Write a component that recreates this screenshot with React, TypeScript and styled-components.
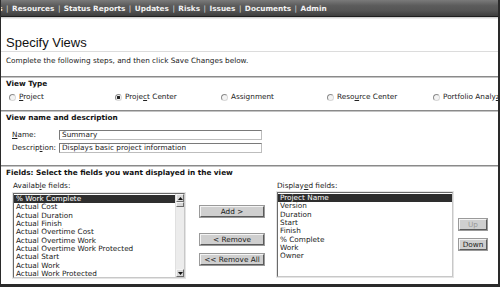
import styled, { createGlobalStyle } from "styled-components";

const Global = createGlobalStyle`
  html, body { margin: 0; padding: 0; background: #fff; }
`;

/* ── Data ── */
const NAV = ["Projects", "Resources", "Status Reports", "Updates", "Risks", "Issues", "Documents", "Admin"];

const VIEW_TYPES: { label: string; key: number; checked?: boolean }[] = [
  { label: "Project", key: 0 },
  { label: "Project Center", key: 5, checked: true },
  { label: "Assignment", key: -1 },
  { label: "Resource Center", key: 4 },
  { label: "Portfolio Analyzer", key: 15 },
];

const AVAILABLE = [
  "% Work Complete",
  "Actual Cost",
  "Actual Duration",
  "Actual Finish",
  "Actual Overtime Cost",
  "Actual Overtime Work",
  "Actual Overtime Work Protected",
  "Actual Start",
  "Actual Work",
  "Actual Work Protected",
];

const DISPLAYED = ["Project Name", "Version", "Duration", "Start", "Finish", "% Complete", "Work", "Owner"];

/* ── Styles ── */
const Frame = styled.div`
  width: 500px;
  height: 287px;
  box-sizing: border-box;
  border-left: 1px solid #2a2a2a;
  border-right: 2px solid #2a2a2a;
  border-bottom: 3px solid #2a2a2a;
  overflow: hidden;
  background: #fff;
  font-family: "DejaVu Sans", Verdana, sans-serif;
  font-size: 7.3px;
  color: #222;
`;

const NavBar = styled.div`
  height: 17px;
  display: flex;
  align-items: center;
  padding-top: 1px;
  box-sizing: border-box;
  overflow: hidden;
  background: linear-gradient(#7a7a7a, #5c5c5c 35%, #555 65%, #3e3e3e);
  border-bottom: 1px solid #1e1e1e;
  box-shadow: 0 1px 0 #d0d0d0, 0 2px 0 #ececec;
  font-weight: bold;
  font-size: 7.3px;
  color: #f2f2f2;
  white-space: nowrap;
`;

const NavTrack = styled.div`
  display: flex;
  margin-left: -32px;
`;

const NavItem = styled.span`
  &:not(:first-child)::before {
    content: "|";
    margin: 0 3.5px;
    font-weight: normal;
    color: #ddd;
  }
`;

const Title = styled.h1`
  margin: 19px 0 0 5px;
  font-family: "Liberation Sans", Arial, sans-serif;
  font-weight: normal;
  font-size: 13px;
  line-height: 14px;
  color: #111;
`;

const Rule = styled.div`
  height: 1px;
  background: #dcdcdc;
  margin-top: 1px;
`;

const Intro = styled.p`
  margin: 4px 0 0 5px;
  line-height: 10px;
  white-space: nowrap;
`;

const Section = styled.section<{ $pad: number }>`
  margin-top: ${(p) => p.$pad}px;
  border-top: 1px solid #8a8a8a;
  box-shadow: inset 0 1px 0 #c4c4c4;
`;

const SectionHead = styled.div`
  font-weight: bold;
  line-height: 10px;
  padding: 2px 0 0 5px;
  color: #111;
  white-space: nowrap;
`;

const RadioRow = styled.div`
  display: flex;
  padding: 3px 0 8px 8px;
  white-space: nowrap;
  overflow: hidden;
`;

const RadioItem = styled.label`
  width: 106px;
  flex-shrink: 0;
  display: flex;
  align-items: center;
  gap: 3px;
  line-height: 10px;
`;

const RadioDot = styled.span<{ $on?: boolean }>`
  width: 7px;
  height: 7px;
  box-sizing: border-box;
  border-radius: 50%;
  border: 1px solid #8c8c8c;
  border-right-color: #d8d8d8;
  border-bottom-color: #d8d8d8;
  background: ${(p) => (p.$on ? "radial-gradient(circle, #222 0 1.4px, #f4f4f4 1.6px)" : "#f4f4f4")};
`;

const Key = styled.span`
  text-decoration: underline;
`;

const FormGrid = styled.div`
  display: grid;
  grid-template-columns: 47px 203px;
  row-gap: 3px;
  align-items: center;
  padding: 7px 0 12px 11px;
`;

const FieldLabel = styled.span`
  line-height: 10px;
`;

const TextBox = styled.div`
  height: 10px;
  box-sizing: border-box;
  border: 1px solid #7a7a7a;
  border-right-color: #bdbdbd;
  border-bottom-color: #bdbdbd;
  padding: 0 2px;
  line-height: 8px;
  background: #fff;
`;

const FieldsArea = styled.div`
  display: grid;
  grid-template-columns: 172px 92px 176px 36px;
  padding: 3px 0 0 12px;
`;

const Column = styled.div`
  display: flex;
  flex-direction: column;
`;

const ListLabel = styled.div`
  line-height: 10px;
  margin-bottom: 2px;
`;

const ListBox = styled.div<{ $top?: number }>`
  height: 85px;
  box-sizing: border-box;
  border: 1px solid #6a6a6a;
  border-right-color: #c8c8c8;
  border-bottom-color: #c8c8c8;
  outline: 1px solid #e4e4e4;
  display: flex;
  margin-top: ${(p) => p.$top ?? 0}px;
  background: #fff;
`;

const Items = styled.div`
  flex: 1;
  padding-top: 1px;
  overflow: hidden;
`;

const Item = styled.div<{ $sel?: boolean }>`
  height: 8.33px;
  line-height: 8.33px;
  padding-left: 2px;
  white-space: nowrap;
  background: ${(p) => (p.$sel ? "#2e2e2e" : "transparent")};
  color: ${(p) => (p.$sel ? "#fff" : "#1a1a1a")};
`;

const ScrollBar = styled.div`
  width: 8px;
  display: flex;
  flex-direction: column;
  background: #ececec;
  border-left: 1px solid #e0e0e0;
`;

const ScrollBtn = styled.div`
  height: 8px;
  box-sizing: border-box;
  background: #d8d8d8;
  border: 1px solid #f4f4f4;
  border-right-color: #6a6a6a;
  border-bottom-color: #6a6a6a;
  display: flex;
  align-items: center;
  justify-content: center;
`;

const Thumb = styled(ScrollBtn)`
  height: 5px;
`;

const Track = styled.div`
  flex: 1;
`;

const ButtonStack = styled.div<{ $top: number; $left: number }>`
  display: flex;
  flex-direction: column;
  align-items: flex-start;
  padding: ${(p) => p.$top}px 0 0 ${(p) => p.$left}px;
`;

const Btn = styled.div<{ $w: number; $gap?: number; $off?: boolean }>`
  width: ${(p) => p.$w}px;
  height: 11px;
  box-sizing: border-box;
  margin-top: ${(p) => p.$gap ?? 0}px;
  background: #cfcfcf;
  border: 1px solid #f4f4f4;
  border-right-color: #5a5a5a;
  border-bottom-color: #5a5a5a;
  outline: 1px solid #9a9a9a;
  text-align: center;
  line-height: 9px;
  color: ${(p) => (p.$off ? "#9a9a9a" : "#1a1a1a")};
  white-space: nowrap;
`;

function Arrow({ up }: { up?: boolean }) {
  return (
    <svg width="5" height="3" viewBox="0 0 5 3">
      <path d={up ? "M0 3 L2.5 0 L5 3 Z" : "M0 0 L2.5 3 L5 0 Z"} fill="#111" />
    </svg>
  );
}

function withKey(label: string, k: number) {
  if (k < 0) return label;
  return (
    <>
      {label.slice(0, k)}
      <Key>{label[k]}</Key>
      {label.slice(k + 1)}
    </>
  );
}

/* ── Component ── */
export default function App() {
  return (
    <Frame>
      <Global />
      <NavBar>
        <NavTrack>
          {NAV.map((n) => (
            <NavItem key={n}>{n}</NavItem>
          ))}
        </NavTrack>
      </NavBar>

      <Title>Specify Views</Title>
      <Rule />
      <Intro>Complete the following steps, and then click Save Changes below.</Intro>

      <Section $pad={10}>
        <SectionHead>View Type</SectionHead>
        <RadioRow>
          {VIEW_TYPES.map((v) => (
            <RadioItem key={v.label}>
              <RadioDot $on={v.checked} />
              <span>{withKey(v.label, v.key)}</span>
            </RadioItem>
          ))}
        </RadioRow>
      </Section>

      <Section $pad={0}>
        <SectionHead>View name and description</SectionHead>
        <FormGrid>
          <FieldLabel>{withKey("Name:", 0)}</FieldLabel>
          <TextBox>Summary</TextBox>
          <FieldLabel>{withKey("Description:", 7)}</FieldLabel>
          <TextBox>Displays basic project information</TextBox>
        </FormGrid>
      </Section>

      <Section $pad={0}>
        <SectionHead>Fields: Select the fields you want displayed in the view</SectionHead>
        <FieldsArea>
          <Column>
            <ListLabel>{withKey("Available fields:", 7)}</ListLabel>
            <ListBox>
              <Items>
                {AVAILABLE.map((f, i) => (
                  <Item key={f} $sel={i === 0}>
                    {f}
                  </Item>
                ))}
              </Items>
              <ScrollBar>
                <ScrollBtn>
                  <Arrow up />
                </ScrollBtn>
                <Thumb />
                <Track />
                <ScrollBtn>
                  <Arrow />
                </ScrollBtn>
              </ScrollBar>
            </ListBox>
          </Column>

          <ButtonStack $top={25} $left={15}>
            <Btn $w={64}>Add &gt;</Btn>
            <Btn $w={64} $gap={17}>
              &lt; Remove
            </Btn>
            <Btn $w={64} $gap={9}>
              &lt;&lt; Remove All
            </Btn>
          </ButtonStack>

          <Column>
            <ListLabel>{withKey("Displayed fields:", 7)}</ListLabel>
            <ListBox $top={-1}>
              <Items>
                {DISPLAYED.map((f, i) => (
                  <Item key={f} $sel={i === 0}>
                    {f}
                  </Item>
                ))}
              </Items>
            </ListBox>
          </Column>

          <ButtonStack $top={38} $left={6}>
            <Btn $w={28} $off>
              Up
            </Btn>
            <Btn $w={28} $gap={9}>
              Down
            </Btn>
          </ButtonStack>
        </FieldsArea>
      </Section>
    </Frame>
  );
}
